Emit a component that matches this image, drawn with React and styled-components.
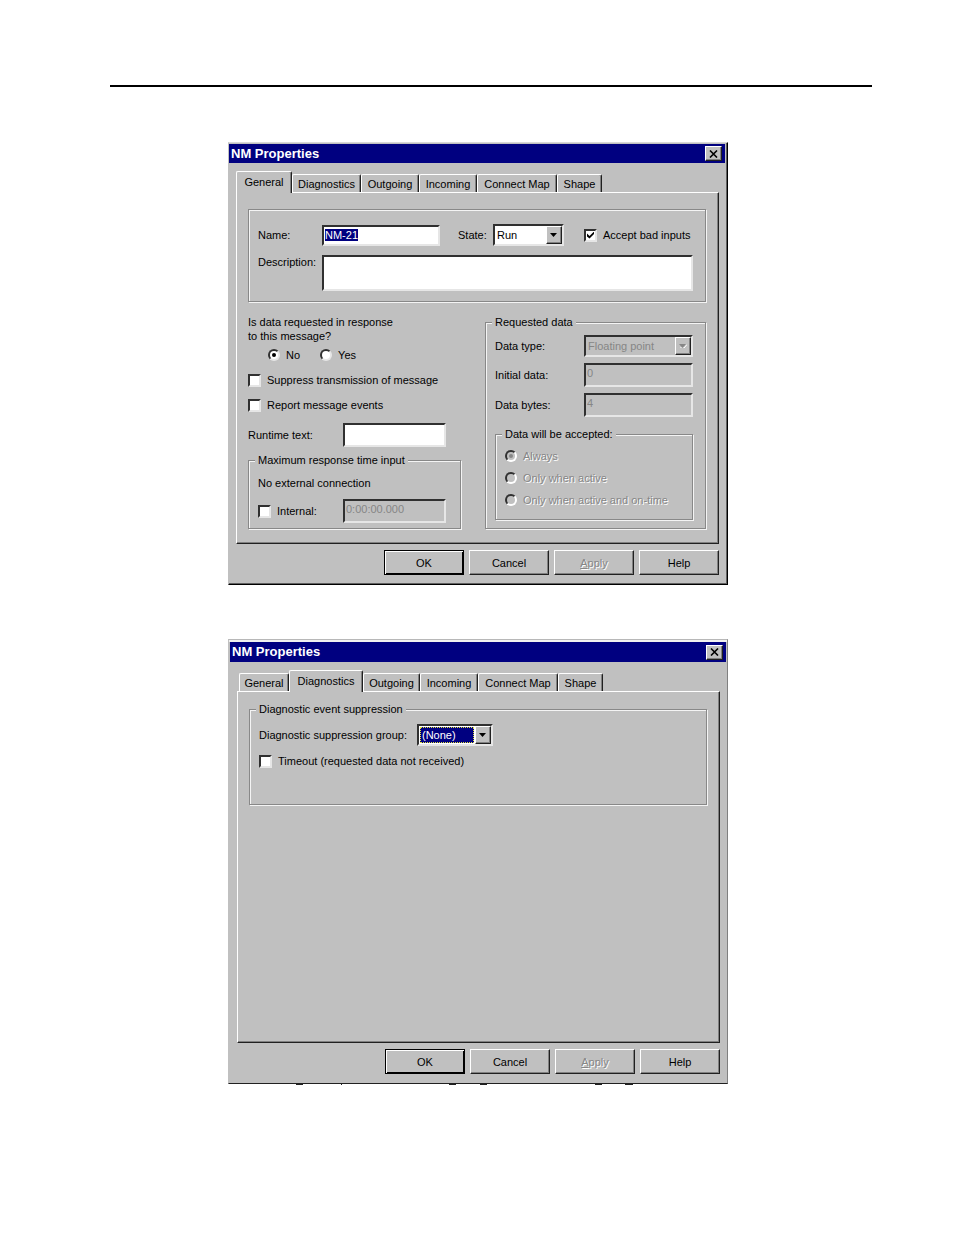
import { useEffect, useRef } from "react";
import styled, { createGlobalStyle, css } from "styled-components";

const GlobalStyle = createGlobalStyle`
  * {
    box-sizing: border-box;
  }
  body {
    margin: 0;
    background: #fff;
    color: #000;
    font: 11px/14px "Liberation Sans", Arial, sans-serif;
  }
  button,
  input,
  select,
  textarea {
    font: inherit;
    color: inherit;
    margin: 0;
    border-radius: 0;
    outline: none;
  }
`;

const raised = css`
  border: 1px solid;
  border-color: #fff #202020 #202020 #fff;
  box-shadow: inset -1px -1px 0 #808080;
`;

const sunken = css`
  border: 2px solid;
  border-color: #303030 #e6e6e6 #e6e6e6 #303030;
`;

const embossed = css`
  color: #868686;
  text-shadow: 1px 1px 0 #fff;
`;

const Page = styled.main`
  padding: 85px 82px 60px 110px;
`;

const Rule = styled.hr`
  height: 2px;
  margin: 0 0 55px;
  border: 0;
  background: #000;
`;

const Figures = styled.div`
  display: flex;
  flex-direction: column;
  gap: 54px;
  padding-right: 26px;
`;

const Figure = styled.div`
  width: 100%;
  max-width: 500px;
  margin: 0 auto;
`;

const Window = styled.section`
  padding: 1px 2px 0 0;
  background: #c0c0c0;
  border: 1px solid;
  border-color: #d8d8d8 #000 #000 #c0c0c0;
  box-shadow: inset -1px -1px 0 #606060;

  ${(p) =>
    p.$framed &&
    css`
      padding: 2px 1px 0;
      border-color: #b8b8b8 #808080 #202020 #c0c0c0;
      box-shadow: inset 0 2px 0 #f0f0f0;
    `}
`;

const TitleBar = styled.header`
  display: flex;
  align-items: center;
  justify-content: space-between;
  height: ${(p) => (p.$framed ? 20 : 19)}px;
  padding: 0 3px 0 2px;
  background: #000080;
  color: #fff;
`;

const Title = styled.h2`
  margin: 0;
  font-size: 13px;
  line-height: 16px;
`;

const CloseButton = styled.button`
  ${raised}
  display: grid;
  place-items: center;
  width: 17px;
  height: 15px;
  padding: 0;
  background: #c0c0c0;
  color: #000;
`;

const Body = styled.div`
  padding: 8px 6px 9px 7px;
`;

const TabList = styled.div`
  display: flex;
  align-items: flex-end;
  height: 21px;
`;

const Tab = styled.button`
  width: ${(p) => p.$width}px;
  height: 18px;
  padding: 0;
  background: #c0c0c0;
  border: 1px solid;
  border-color: #fff #202020 transparent #fff;
  border-bottom: 0;
  border-radius: 2px 2px 0 0;
  box-shadow: inset -1px 0 0 #808080;
  white-space: nowrap;

  &:first-child:not([aria-selected="true"]) {
    margin-left: 2px;
  }

  &[aria-selected="true"] {
    position: relative;
    height: 22px;
    margin-bottom: -1px;
    padding-bottom: 2px;
  }
`;

const Panel = styled.div`
  ${raised}
  min-height: 352px;
  padding: ${(p) => p.$top}px 12px 13px 11px;
`;

const Group = styled.fieldset`
  min-width: 0;
  margin: 0;
  padding: 0 12px 0 9px;
  border: 1px solid #888;
  box-shadow: 1px 1px 0 #f4f4f4, inset 1px 1px 0 #f4f4f4;
`;

const Legend = styled.legend`
  margin-left: -3px;
  padding: 0 3px;
  background: #c0c0c0;
`;

const Stack = styled.div`
  display: flex;
  flex-direction: column;
  gap: ${(p) => p.$gap}px;
  padding: ${(p) => p.$top || 0}px 0 ${(p) => p.$bottom || 0}px;
`;

const Row = styled.div`
  display: flex;
  align-items: ${(p) => p.$align || "center"};
`;

const Columns = styled.div`
  display: grid;
  grid-template-columns: minmax(0, 1fr) 221px;
  gap: 24px;
  margin-top: 13px;
`;

const Label = styled.label`
  flex: none;
  width: ${(p) => p.$width}px;
  padding-left: ${(p) => p.$indent || 0}px;
  white-space: nowrap;
`;

const TextBox = styled.input`
  ${sunken}
  flex: ${(p) => (p.$width ? "none" : "1")};
  width: ${(p) => (p.$width ? p.$width + "px" : "auto")};
  min-width: 0;
  height: ${(p) => p.$height || 24}px;
  padding: 0 1px;
  background: #fff;
  line-height: 16px;

  &::selection {
    background: #000080;
    color: #fff;
  }

  &:disabled {
    padding-bottom: 4px;
    background: #c0c0c0;
    color: #868686;
  }
`;

const TextArea = styled.textarea`
  ${sunken}
  flex: 1;
  min-width: 0;
  height: 36px;
  padding: 1px;
  background: #fff;
  resize: none;
`;

const SelectFrame = styled.div`
  ${sunken}
  display: grid;
  grid-template-columns: minmax(0, 1fr) 16px;
  flex: ${(p) => (p.$width ? "none" : "1")};
  width: ${(p) => (p.$width ? p.$width + "px" : "auto")};
  height: 22px;
  background: ${(p) => (p.$disabled ? "#c0c0c0" : "#fff")};
`;

const SelectBox = styled.select`
  appearance: none;
  min-width: 0;
  padding: 0 2px;
  background: transparent;
  border: 0;

  &:disabled {
    color: #868686;
    opacity: 1;
  }

  ${(p) =>
    p.$highlighted &&
    css`
      margin: 1px;
      padding: 0 1px;
      background: #000080;
      border: 1px dotted #e0e040;
      color: #fff;
    `}
`;

const DropArrow = styled.span`
  ${raised}
  display: grid;
  place-items: center;
  background: #c0c0c0;
  color: ${(p) => (p.$disabled ? "#868686" : "#000")};
`;

const Choice = styled.label`
  display: flex;
  align-items: center;
  gap: 6px;
  min-height: 14px;
  margin-left: ${(p) => p.$indent || 0}px;
  white-space: nowrap;
  ${(p) => p.$disabled && embossed}
`;

const CheckBox = styled.input.attrs({ type: "checkbox" })`
  appearance: none;
  flex: none;
  display: grid;
  width: 13px;
  height: 13px;
  background: #fff;
  border: 2px solid;
  border-color: #303030 #e6e6e6 #e6e6e6 #303030;

  &:checked::after {
    content: "";
    width: 7px;
    height: 7px;
    margin: 1px;
    background: #000;
    clip-path: polygon(0 29%, 36% 64%, 100% 0, 100% 36%, 36% 100%, 0 71%);
  }
`;

const Radio = styled.input.attrs({ type: "radio" })`
  appearance: none;
  flex: none;
  display: grid;
  place-items: center;
  width: 12px;
  height: 12px;
  background: #fff;
  border: 2px solid;
  border-color: #303030 #e6e6e6 #e6e6e6 #303030;
  border-radius: 50%;

  &:checked::after {
    content: "";
    width: 4px;
    height: 4px;
    background: #000;
    border-radius: 50%;
  }

  &:disabled {
    background: #c0c0c0;
    border-right-color: #fff;
    border-bottom-color: #fff;
  }

  &:disabled::after {
    background: #868686;
  }
`;

const RadioRow = styled.div`
  display: flex;
  gap: 20px;
  padding-left: 20px;
`;

const Question = styled.p`
  margin: 0 0 5px;
  max-width: 150px;
`;

const Plain = styled.p`
  margin: 0;
`;

const Actions = styled.footer`
  display: flex;
  justify-content: flex-end;
  gap: 5px;
  margin-top: 6px;
`;

const PushButton = styled.button`
  ${raised}
  width: 80px;
  height: 25px;
  padding: 0;
  background: #c0c0c0;

  ${(p) =>
    p.$primary &&
    css`
      border-color: #000;
      box-shadow: inset 1px 1px 0 #fff, inset -1px -1px 0 #000;
    `}

  &:disabled {
    ${embossed}
  }
`;

const Remnants = styled.svg`
  display: block;
  width: 100%;
  height: 2px;
`;

function Dropdown({ id, value, width, disabled, highlighted }) {
  return (
    <SelectFrame $width={width} $disabled={disabled}>
      <SelectBox
        id={id}
        defaultValue={value}
        disabled={disabled}
        $highlighted={highlighted}
      >
        <option>{value}</option>
      </SelectBox>
      <DropArrow $disabled={disabled}>
        <svg width="8" height="4" viewBox="0 0 8 4" aria-hidden="true">
          {disabled && <path d="M1 4L5 4L8 0.5" stroke="#fff" fill="none" />}
          <path d="M0 0H7L3.5 4Z" fill="currentColor" />
        </svg>
      </DropArrow>
    </SelectFrame>
  );
}

function PropertiesWindow({ tabs, selected, framed, top, children }) {
  return (
    <Window $framed={framed} aria-label="NM Properties">
      <TitleBar $framed={framed}>
        <Title>NM Properties</Title>
        <CloseButton type="button" aria-label="Close">
          <svg width="9" height="8" viewBox="0 0 9 8" aria-hidden="true">
            <path d="M1 0.5L8 7.5M8 0.5L1 7.5" stroke="#000" strokeWidth="1.6" />
          </svg>
        </CloseButton>
      </TitleBar>
      <Body>
        <TabList role="tablist">
          {tabs.map(([name, width]) => (
            <Tab
              key={name}
              type="button"
              role="tab"
              aria-selected={name === selected}
              $width={width}
            >
              {name}
            </Tab>
          ))}
        </TabList>
        <Panel role="tabpanel" $top={top}>
          {children}
        </Panel>
        <Actions>
          <PushButton type="button" $primary>
            OK
          </PushButton>
          <PushButton type="button">Cancel</PushButton>
          <PushButton type="button" disabled>
            <u>A</u>pply
          </PushButton>
          <PushButton type="button">Help</PushButton>
        </Actions>
      </Body>
    </Window>
  );
}

const generalTabs = [
  ["General", 56],
  ["Diagnostics", 69],
  ["Outgoing", 58],
  ["Incoming", 58],
  ["Connect Map", 80],
  ["Shape", 45],
];

const diagnosticsTabs = [
  ["General", 50],
  ["Diagnostics", 74],
  ["Outgoing", 57],
  ["Incoming", 58],
  ["Connect Map", 80],
  ["Shape", 45],
];

const acceptOptions = ["Always", "Only when active", "Only when active and on-time"];

function GeneralPage() {
  const nameRef = useRef(null);

  useEffect(() => {
    nameRef.current.focus({ preventScroll: true });
    nameRef.current.select();
  }, []);

  return (
    <>
      <Group>
        <Stack $gap={9} $top={14} $bottom={10}>
          <Row>
            <Label htmlFor="name" $width={64}>
              Name:
            </Label>
            <TextBox
              id="name"
              ref={nameRef}
              defaultValue="NM-21"
              $width={118}
              $height={21}
            />
            <Label htmlFor="state" $width={53} $indent={18}>
              State:
            </Label>
            <Dropdown id="state" value="Run" width={71} />
            <Choice $indent={20}>
              <CheckBox defaultChecked />
              Accept bad inputs
            </Choice>
          </Row>
          <Row $align="flex-start">
            <Label htmlFor="description" $width={64}>
              Description:
            </Label>
            <TextArea id="description" />
          </Row>
        </Stack>
      </Group>
      <Columns>
        <div>
          <Question id="question">
            Is data requested in response to this message?
          </Question>
          <RadioRow role="radiogroup" aria-labelledby="question">
            <Choice>
              <Radio name="requested" defaultChecked />
              No
            </Choice>
            <Choice>
              <Radio name="requested" />
              Yes
            </Choice>
          </RadioRow>
          <Stack $gap={11} $top={11} $bottom={6}>
            <Choice>
              <CheckBox />
              Suppress transmission of message
            </Choice>
            <Choice>
              <CheckBox />
              Report message events
            </Choice>
            <Row>
              <Label htmlFor="runtime" $width={95}>
                Runtime text:
              </Label>
              <TextBox id="runtime" $width={103} />
            </Row>
          </Stack>
          <Group>
            <Legend>Maximum response time input</Legend>
            <Stack $gap={9} $top={9} $bottom={5}>
              <Plain>No external connection</Plain>
              <Row>
                <Label as="div" $width={85}>
                  <Choice>
                    <CheckBox />
                    Internal:
                  </Choice>
                </Label>
                <TextBox
                  aria-label="Internal time"
                  defaultValue="0:00:00.000"
                  disabled
                  $width={103}
                />
              </Row>
            </Stack>
          </Group>
        </div>
        <Group>
          <Legend>Requested data</Legend>
          <Stack $gap={6} $top={6} $bottom={10}>
            <Row>
              <Label htmlFor="type" $width={89}>
                Data type:
              </Label>
              <Dropdown id="type" value="Floating point" disabled />
            </Row>
            <Row>
              <Label htmlFor="initial" $width={89}>
                Initial data:
              </Label>
              <TextBox id="initial" defaultValue="0" disabled />
            </Row>
            <Row>
              <Label htmlFor="bytes" $width={89}>
                Data bytes:
              </Label>
              <TextBox id="bytes" defaultValue="4" disabled />
            </Row>
          </Stack>
          <Group>
            <Legend>Data will be accepted:</Legend>
            <Stack $gap={8} $top={8} $bottom={12}>
              {acceptOptions.map((option, i) => (
                <Choice key={option} $disabled>
                  <Radio name="accepted" defaultChecked={i === 0} disabled />
                  {option}
                </Choice>
              ))}
            </Stack>
          </Group>
        </Group>
      </Columns>
    </>
  );
}

function DiagnosticsPage() {
  return (
    <Group>
      <Legend>Diagnostic event suppression</Legend>
      <Stack $gap={8} $top={8} $bottom={36}>
        <Row>
          <Label htmlFor="group" $width={158}>
            Diagnostic suppression group:
          </Label>
          <Dropdown id="group" value="(None)" width={76} highlighted />
        </Row>
        <Choice>
          <CheckBox />
          Timeout (requested data not received)
        </Choice>
      </Stack>
    </Group>
  );
}

function App() {
  return (
    <>
      <GlobalStyle />
      <Page>
        <Rule />
        <Figures>
          <Figure>
            <PropertiesWindow tabs={generalTabs} selected="General" top={16}>
              <GeneralPage />
            </PropertiesWindow>
          </Figure>
          <Figure>
            <PropertiesWindow
              tabs={diagnosticsTabs}
              selected="Diagnostics"
              top={10}
              framed
            >
              <DiagnosticsPage />
            </PropertiesWindow>
            <Remnants viewBox="0 0 500 2" aria-hidden="true">
              <path
                d="M68 0.5H75M113 0.5H114M221 0.5H228M252 0.5H259M367 0.5H374M397 0.5H405"
                stroke="#202020"
              />
            </Remnants>
          </Figure>
        </Figures>
      </Page>
    </>
  );
}

export default App;
